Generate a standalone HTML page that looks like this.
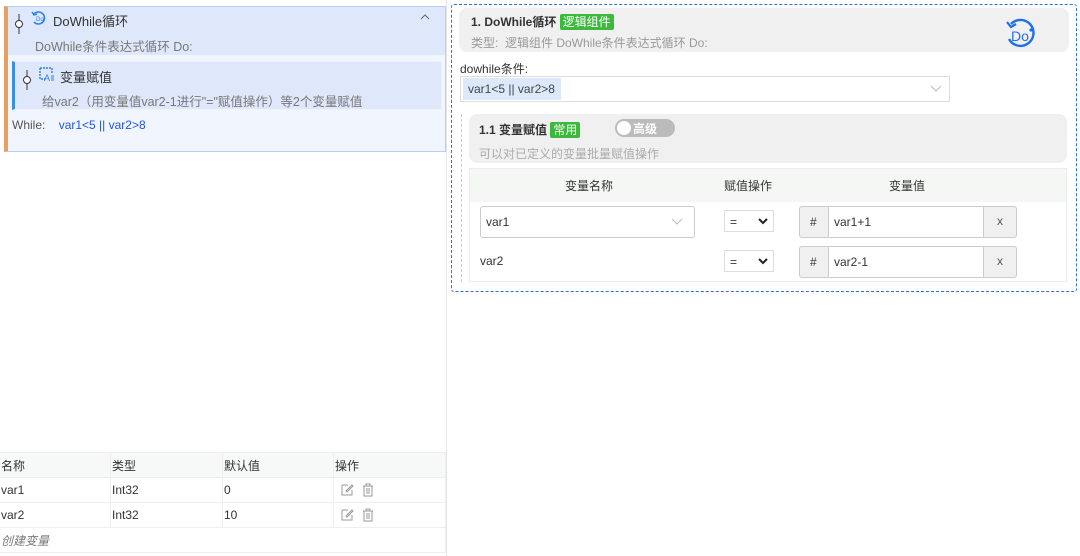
<!DOCTYPE html>
<html><head><meta charset="utf-8"><style>
*{box-sizing:border-box;margin:0;padding:0}
body{width:1080px;height:556px;background:#fff;font-family:"Liberation Sans","Noto Sans CJK SC",sans-serif;font-size:12px;color:#333;position:relative;overflow:hidden}
.abs{position:absolute;white-space:nowrap}
.divider{left:446px;top:0;width:1px;height:556px;background:#e6e6e6}
.lbox{left:4px;top:6px;width:442px;height:146px;border:1px solid #b8cdf7;border-left:4px solid #e8a060;background:#f1f5fe}
.tbl{left:-1px;top:452px;width:447px;border-collapse:collapse}
.tbl td{border:1px solid #eee;height:25px;padding:0 0 0 1px;font-size:12px;color:#333}
.tbl tr:first-child td{background:#f7f8f8}
.tag{background:#3cb93c;color:#fff;padding:1px 3px;border-radius:2px;font-weight:normal;font-size:12px}
.sel{border:1px solid #ddd;background:#fff}
.inp{border:1px solid #ccc;border-radius:3px;background:#fff}
</style></head><body>
<div class="abs divider"></div>
<div class="abs lbox"></div>
<div class="abs" style="left:8px;top:7px;width:437px;height:48px;background:#dfe8fb"></div>
<svg class="abs" style="left:14px;top:14px" width="10" height="20"><line x1="5" y1="0" x2="5" y2="20" stroke="#333"/><circle cx="5" cy="10" r="3.5" fill="#fff" stroke="#333"/></svg>
<svg class="abs" style="left:31px;top:10px" width="16" height="16" viewBox="0 0 16 16"><path d="M3 4A6 6 0 1 1 3 12" fill="none" stroke="#2a7ef0" stroke-width="1.6"/><path d="M1 2l2 3 3-1" fill="none" stroke="#2a7ef0" stroke-width="1.4"/><text x="5" y="11" font-size="6" fill="#2a7ef0">Do</text></svg>
<div class="abs" style="left:53px;top:11px;font-size:13px;color:#333">DoWhile循环</div>
<svg class="abs" style="left:420px;top:14px" width="10" height="6"><path d="M1 5l4-4 4 4" fill="none" stroke="#666"/></svg>
<div class="abs" style="left:35px;top:36px;color:#777;font-size:12.5px">DoWhile条件表达式循环 Do:</div>
<div class="abs" style="left:12px;top:61px;width:430px;height:49px;background:#dfe8fb;border:1px solid #eef2fc;border-left:3px solid #3a8ee6"></div>
<svg class="abs" style="left:22px;top:70px" width="10" height="20"><line x1="5" y1="0" x2="5" y2="20" stroke="#333"/><circle cx="5" cy="10" r="3.5" fill="#fff" stroke="#333"/></svg>
<svg class="abs" style="left:39px;top:67px" width="16" height="15" viewBox="0 0 16 15"><path d="M1 1h12v5M1 1v11h5" fill="none" stroke="#2a7ef0" stroke-width="1.4" stroke-dasharray="2 1"/><text x="5" y="14" font-size="9" fill="#2a7ef0">A</text><path d="M12 9h3M12 11h3M12 13h3" stroke="#2a7ef0"/></svg>
<div class="abs" style="left:60px;top:67px;font-size:13px;color:#333">变量赋值</div>
<div class="abs" style="left:42px;top:91px;color:#777;font-size:12.5px">给var2（用变量值var2-1进行"="赋值操作）等2个变量赋值</div>
<div class="abs" style="left:12px;top:118px;color:#555">While: <span style="color:#2255dd;margin-left:10px">var1&lt;5 || var2&gt;8</span></div>

<table class="abs tbl">
<tr><td style="width:111px">名称</td><td style="width:112px">类型</td><td style="width:111px">默认值</td><td>操作</td></tr>
<tr><td>var1</td><td>Int32</td><td>0</td><td><svg width="40" height="14" style="margin-left:6px;vertical-align:middle"><path d="M1 2h6M1 2v10h10V7M5 8l6-6 1 1-6 6z" fill="none" stroke="#999"/><path d="M22 3h10M25 3V1h4v2M23 3v10h8V3M26 5v6M28 5v6" fill="none" stroke="#999"/></svg></td></tr>
<tr><td>var2</td><td>Int32</td><td>10</td><td><svg width="40" height="14" style="margin-left:6px;vertical-align:middle"><path d="M1 2h6M1 2v10h10V7M5 8l6-6 1 1-6 6z" fill="none" stroke="#999"/><path d="M22 3h10M25 3V1h4v2M23 3v10h8V3M26 5v6M28 5v6" fill="none" stroke="#999"/></svg></td></tr>
<tr><td colspan="4" style="font-style:italic;color:#777">创建变量</td></tr>
</table>

<div class="abs" style="left:451px;top:4px;width:626px;height:288px;border:1px dashed #2a6fe0;border-radius:3px"></div>
<div class="abs" style="left:459px;top:8px;width:610px;height:44px;background:#f0f0f0;border-radius:8px"></div>
<div class="abs" style="left:471px;top:13px;font-weight:bold;color:#333">1. DoWhile循环 <span class="tag">逻辑组件</span></div>
<div class="abs" style="left:471px;top:34px;color:#999">类型:&nbsp; 逻辑组件 DoWhile条件表达式循环 Do:</div>
<svg class="abs" style="left:1004px;top:16px" width="36" height="34" viewBox="0 0 36 34"><path d="M7 8A13 13 0 1 1 5 23" fill="none" stroke="#1e6fef" stroke-width="2.4"/><path d="M3 6l4 5 5-3" fill="none" stroke="#1e6fef" stroke-width="2.2"/><text x="7" y="25" font-size="14" fill="#1e6fef">Do</text><circle cx="27" cy="14" r="1.6" fill="#1e6fef"/></svg>
<div class="abs" style="left:460px;top:60px;color:#333">dowhile条件:</div>
<div class="abs sel" style="left:460px;top:76px;width:490px;height:26px"></div>
<div class="abs" style="left:463px;top:78px;width:98px;height:22px;background:#dde8fb;color:#444;padding:4px 0 0 5px">var1&lt;5 || var2&gt;8</div>
<svg class="abs" style="left:930px;top:85px" width="12" height="7"><path d="M1 1l5 5 5-5" fill="none" stroke="#bbb"/></svg>
<div class="abs" style="left:461px;top:114px;height:168px;border-left:1px dashed #ccc"></div>
<div class="abs" style="left:469px;top:114px;width:598px;height:49px;background:#f0f0f0;border-radius:8px"></div>
<div class="abs" style="left:479px;top:121px;font-weight:bold;color:#333">1.1 变量赋值 <span class="tag">常用</span></div>
<div class="abs" style="left:615px;top:119px;width:60px;height:18px;background:#bbb;border-radius:9px"></div>
<div class="abs" style="left:617px;top:121px;width:14px;height:14px;background:#fff;border-radius:7px"></div>
<div class="abs" style="left:633px;top:120px;color:#fff;font-weight:bold">高级</div>
<div class="abs" style="left:479px;top:145px;color:#aaa">可以对已定义的变量批量赋值操作</div>
<div class="abs" style="left:469px;top:168px;width:598px;height:114px;border:1px solid #eaeeea"></div>
<div class="abs" style="left:470px;top:169px;width:596px;height:33px;background:#f5f7f5"></div>
<div class="abs" style="left:565px;top:177px;color:#333">变量名称</div>
<div class="abs" style="left:724px;top:177px;color:#333">赋值操作</div>
<div class="abs" style="left:889px;top:177px;color:#333">变量值</div>
<div class="abs inp" style="left:480px;top:206px;width:215px;height:32px;padding:8px 0 0 5px">var1</div>
<svg class="abs" style="left:671px;top:218px" width="12" height="7"><path d="M1 1l5 5 5-5" fill="none" stroke="#bbb"/></svg>
<div class="abs" style="left:480px;top:254px;color:#333">var2</div>
<div class="abs sel" style="left:724px;top:210px;width:50px;height:22px;padding:4px 0 0 5px">=</div>
<svg class="abs" style="left:758px;top:218px" width="10" height="7"><path d="M1 1l4 4 4-4" fill="none" stroke="#222" stroke-width="2"/></svg>
<div class="abs sel" style="left:724px;top:250px;width:50px;height:22px;padding:4px 0 0 5px">=</div>
<svg class="abs" style="left:758px;top:258px" width="10" height="7"><path d="M1 1l4 4 4-4" fill="none" stroke="#222" stroke-width="2"/></svg>
<div class="abs inp" style="left:799px;top:206px;width:218px;height:32px;background:#f0f0f0"></div>
<div class="abs" style="left:828px;top:207px;width:156px;height:30px;background:#fff;border-left:1px solid #ccc;border-right:1px solid #ccc;padding:8px 0 0 5px">var1+1</div>
<div class="abs" style="left:810px;top:215px">#</div><div class="abs" style="left:997px;top:214px;color:#555">x</div>
<div class="abs inp" style="left:799px;top:246px;width:218px;height:32px;background:#f0f0f0"></div>
<div class="abs" style="left:828px;top:247px;width:156px;height:30px;background:#fff;border-left:1px solid #ccc;border-right:1px solid #ccc;padding:8px 0 0 5px">var2-1</div>
<div class="abs" style="left:810px;top:255px">#</div><div class="abs" style="left:997px;top:254px;color:#555">x</div>
</body></html>
